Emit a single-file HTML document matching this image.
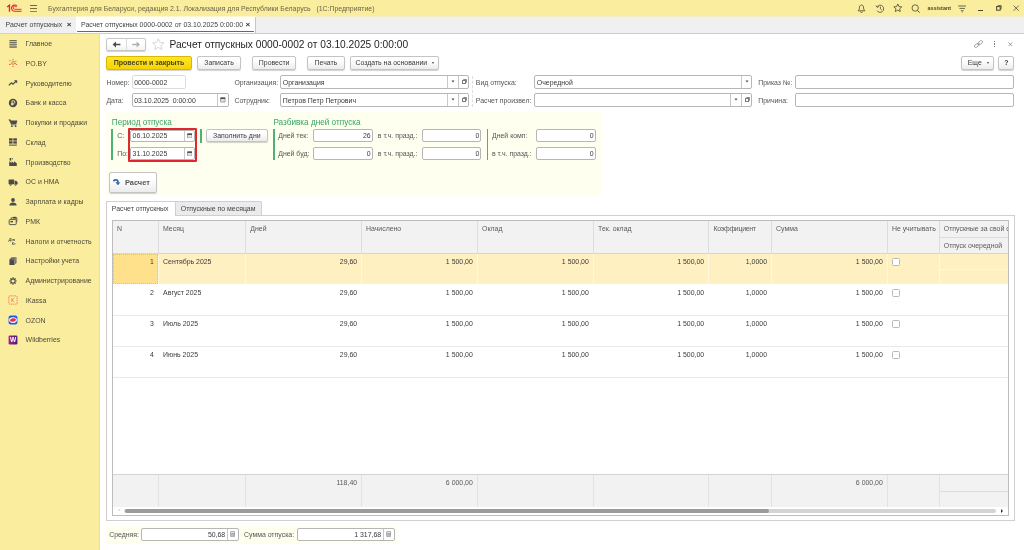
<!DOCTYPE html>
<html><head><meta charset="utf-8"><title>1C</title>
<style>
*{box-sizing:border-box;margin:0;padding:0}
html,body{width:1024px;height:550px;overflow:hidden;background:#fff}
body{font-family:"Liberation Sans",sans-serif;font-size:6.93px;color:#3a3a3a;position:relative;line-height:1}
#root{position:absolute;left:0;top:0;width:1024px;height:550px;will-change:transform}
.a{position:absolute}
.t{position:absolute;white-space:nowrap;line-height:10px;height:10px}
.r{text-align:right}
.btn{position:absolute;border:1px solid #c4c4c4;border-radius:2px;background:linear-gradient(#ffffff 30%,#ececec);box-shadow:0 1px 1px rgba(0,0,0,.18);color:#3a3a3a;text-align:center;white-space:nowrap;line-height:12px}
.inp{position:absolute;border:1px solid #b6b6b6;border-radius:2px;background:#fff}
.dv{position:absolute;width:1px;background:#c8c8c8}
.gb{position:absolute;width:2px;background:#3fae6c}
.side{color:#4d4a3c}
.lbl{color:#555}
.hd{color:#5a5a5a}
</style></head><body><div id="root">
<div class="a" style="left:0;top:0;width:1024px;height:16px;background:#fbed9e"></div>
<div class="a" style="left:0;top:16px;width:1024px;height:1px;background:#f5eec7"></div>
<div class="a" style="left:0;top:17px;width:1024px;height:17px;background:#f0f0f0;border-bottom:1px solid #cbcbcb"></div>
<div class="a" style="left:0;top:34px;width:100px;height:516px;background:#fbed9e;border-right:1px solid #f0df8d"></div>
<div class="a" style="left:0;top:33px;width:100px;height:1px;background:#d9d3ae"></div>
<svg class="a" style="left:6.4px;top:3.6px" width="17" height="9" viewBox="0 0 18 10"><g fill="none" stroke="#e3242d" stroke-width="1.5"><path d="M0.8 3.4 L3.4 1.4 V8.6"/><path d="M11.8 2.6 A3.4 3.4 0 1 0 9 8 H16.8" stroke-width="1.2"/><path d="M10.8 3.8 A1.7 1.7 0 1 0 9.2 5.9 H16.8" stroke-width="1"/></g></svg>
<div class="a" style="left:30px;top:5px;width:7.4px;height:1px;background:#6f694e;box-shadow:0 3px 0 #6f694e,0 6px 0 #8a8468"></div>
<div class="t " style="left:48px;top:3.70px;color:#6a6448;white-space:pre">Бухгалтерия для Беларуси, редакция 2.1. Локализация для Республики Беларусь&nbsp;&nbsp; (1С:Предприятие)</div>
<svg class="a" style="left:857.40px;top:3.60px" width="9" height="9.4" viewBox="0 0 9 9.4"><path d="M4.5 1 C2.8 1 2.4 2.6 2.4 4 C2.4 5.6 1.6 6.2 1 6.8 H8 C7.4 6.2 6.6 5.6 6.6 4 C6.6 2.6 6.2 1 4.5 1 Z" fill="none" stroke="#4a4632" stroke-width="0.8"/><path d="M3.6 7.6 A0.9 0.9 0 0 0 5.4 7.6" fill="none" stroke="#4a4632" stroke-width="0.8"/></svg><svg class="a" style="left:875.40px;top:3.60px" width="10" height="9.4" viewBox="0 0 10 9.4"><path d="M2.2 2.6 A3.6 3.6 0 1 1 2 6.6" fill="none" stroke="#4a4632" stroke-width="0.8"/><path d="M0.8 1.6 L2.2 3.4 L4 2.4" fill="none" stroke="#4a4632" stroke-width="0.8"/><path d="M5.4 2.6 V4.8 L6.8 6" fill="none" stroke="#4a4632" stroke-width="0.8"/></svg><svg class="a" style="left:893.20px;top:3.20px" width="9.6" height="9.4" viewBox="0 0 24 23"><path d="M12 2.2 L14.9 8.8 L22 9.5 L16.7 14.2 L18.2 21.2 L12 17.6 L5.8 21.2 L7.3 14.2 L2 9.5 L9.1 8.8 Z" fill="none" stroke="#4a4632" stroke-width="2" stroke-linejoin="round"/></svg><svg class="a" style="left:911.40px;top:3.60px" width="9.4" height="9.4" viewBox="0 0 9.4 9.4"><circle cx="4.2" cy="4" r="3.2" fill="none" stroke="#4a4632" stroke-width="0.8"/><path d="M6.4 6.4 L8.6 8.6" stroke="#4a4632" stroke-width="1"/></svg><div class="t" style="left:927.6px;top:3.2px;font-size:5.4px;font-weight:bold;color:#4a4632">assistant</div><svg class="a" style="left:958.00px;top:4.60px" width="8.4" height="8" viewBox="0 0 8.4 8"><g stroke="#4a4632" stroke-width="0.8"><path d="M0.2 1 H8.2 M1.4 3.4 H7 M2.8 5.7 H5.6"/></g><path d="M3.5 6.8 H4.9 L4.2 7.8 Z" fill="#4a4632"/></svg><div class="a" style="left:977.8px;top:10.2px;width:5px;height:1px;background:#4a4632"></div><svg class="a" style="left:995.60px;top:5.00px" width="6" height="6" viewBox="0 0 6 6"><rect x="0.6" y="1.6" width="3.6" height="3.6" fill="none" stroke="#4a4632" stroke-width="1"/><path d="M2 1.4 V0.6 H5.2 V3.8 H4.4" fill="none" stroke="#4a4632" stroke-width="0.8"/></svg><svg class="a" style="left:1013.40px;top:5.00px" width="6.4" height="6.4" viewBox="0 0 6.4 6.4"><path d="M0.6 0.6 L5.8 5.8 M5.8 0.6 L0.6 5.8" stroke="#4a4632" stroke-width="0.8"/></svg>
<div class="a" style="left:75.5px;top:17px;width:1px;height:17px;background:#d8d8d8"></div>
<div class="t " style="left:5.5px;top:20.20px;color:#444">Расчет отпускных</div>
<div class="t " style="left:66.8px;top:20.00px;font-size:8px;color:#333;font-weight:bold">×</div>
<div class="a" style="left:76px;top:17px;width:180px;height:16px;background:#fff;border-right:1px solid #c8c8c8;box-shadow:0 -1px 0 #fdf6ce"></div>
<div class="a" style="left:77px;top:31px;width:177px;height:1px;background:#0f9b4e;border-radius:0.5px"></div>
<div class="t " style="left:81px;top:20.20px;color:#444">Расчет отпускных 0000-0002 от 03.10.2025 0:00:00</div>
<div class="t " style="left:245.6px;top:20.00px;font-size:8px;color:#333;font-weight:bold">×</div>
<div class="t side" style="left:25.6px;top:39.20px;">Главное</div>
<svg class="a" style="left:8.10px;top:38.60px" width="10" height="10" viewBox="0 0 10 10"><rect x="1.4" y="1.20" width="7.4" height="1.05" fill="#4b4b4b"/><rect x="1.4" y="3.25" width="7.4" height="1.05" fill="#4b4b4b"/><rect x="1.4" y="5.30" width="7.4" height="1.05" fill="#4b4b4b"/><rect x="1.4" y="7.1" width="7.4" height="1.9" fill="#8c8873"/></svg>
<div class="t side" style="left:25.6px;top:58.95px;">PO.BY</div>
<svg class="a" style="left:7.50px;top:58.00px" width="10" height="10" viewBox="0 0 10 10"><g stroke="#eab45c" stroke-width="0.5"><line x1="5.00" y1="4.90" x2="5.00" y2="1.30"/><line x1="5.00" y1="4.90" x2="1.90" y2="2.50"/><line x1="5.00" y1="4.90" x2="5.00" y2="3.50"/><line x1="5.00" y1="4.90" x2="7.00" y2="3.40"/><line x1="5.00" y1="4.90" x2="3.70" y2="5.10"/><line x1="5.00" y1="4.90" x2="7.00" y2="5.50"/><line x1="5.00" y1="4.90" x2="8.60" y2="6.40"/><line x1="5.00" y1="4.90" x2="1.90" y2="6.40"/><line x1="5.00" y1="4.90" x2="5.00" y2="6.60"/><line x1="5.00" y1="4.90" x2="5.00" y2="8.40"/><line x1="7" y1="3.4" x2="8.8" y2="3.2"/></g><circle cx="5.00" cy="1.30" r="0.5" fill="#e8323a"/><circle cx="1.90" cy="2.50" r="0.5" fill="#e8323a"/><circle cx="5.00" cy="3.50" r="0.5" fill="#e8323a"/><circle cx="7.00" cy="3.40" r="0.5" fill="#e8323a"/><circle cx="3.70" cy="5.10" r="0.5" fill="#e8323a"/><circle cx="7.00" cy="5.50" r="0.65" fill="#e8323a"/><circle cx="8.60" cy="6.40" r="0.5" fill="#e8323a"/><circle cx="1.90" cy="6.40" r="0.65" fill="#e8323a"/><circle cx="5.00" cy="6.60" r="0.5" fill="#e8323a"/><circle cx="5.00" cy="8.40" r="0.5" fill="#e8323a"/><circle cx="8.6" cy="3.2" r="0.45" fill="#f0b050"/></svg>
<div class="t side" style="left:25.6px;top:78.70px;">Руководителю</div>
<svg class="a" style="left:8.10px;top:78.10px" width="10" height="10" viewBox="0 0 10 10"><path d="M0.8 7.4 L3.4 4.8 L5 6.2 L8.2 3" fill="none" stroke="#4b4b4b" stroke-width="1.3"/><path d="M6 2.2 H9.2 V5.4 Z" fill="#4b4b4b"/></svg>
<div class="t side" style="left:25.6px;top:98.45px;">Банк и касса</div>
<svg class="a" style="left:8.10px;top:97.85px" width="10" height="10" viewBox="0 0 10 10"><circle cx="5" cy="5" r="4.2" fill="#4b4b4b"/><path d="M4 7.6 V2.8 H5.6 A1.3 1.3 0 0 1 5.6 5.4 H3.2 M3.2 6.5 H5.6" fill="none" stroke="#fbed9e" stroke-width="0.9"/></svg>
<div class="t side" style="left:25.6px;top:118.20px;">Покупки и продажи</div>
<svg class="a" style="left:8.10px;top:117.60px" width="10" height="10" viewBox="0 0 10 10"><path d="M0.4 1.4 H2 L2.6 2.6 H9.4 L8.4 6 H3.4 Z" fill="#4b4b4b"/><path d="M2 1.4 L3.4 6.8 H8.4" fill="none" stroke="#4b4b4b" stroke-width="0.8"/><circle cx="3.9" cy="8.2" r="0.9" fill="#4b4b4b"/><circle cx="7.6" cy="8.2" r="0.9" fill="#4b4b4b"/></svg>
<div class="t side" style="left:25.6px;top:137.95px;">Склад</div>
<svg class="a" style="left:8.10px;top:137.35px" width="10" height="10" viewBox="0 0 10 10"><g fill="#4b4b4b"><rect x="1" y="1.3" width="3.6" height="2.3"/><rect x="5.3" y="1.3" width="3.6" height="2.3"/><rect x="1" y="4.3" width="3.6" height="2.3"/><rect x="5.3" y="4.3" width="3.6" height="2.3"/><rect x="1" y="7.6" width="7.9" height="1"/></g></svg>
<div class="t side" style="left:25.6px;top:157.70px;">Производство</div>
<svg class="a" style="left:8.10px;top:157.10px" width="10" height="10" viewBox="0 0 10 10"><path d="M1.2 9 V4.2 L3.6 6 V4.2 L6 6 V4.2 L8.8 6.2 V9 Z" fill="#4b4b4b"/><rect x="1.6" y="1" width="1.6" height="2.6" fill="#4b4b4b"/><rect x="3.8" y="1" width="1.2" height="1.4" fill="#4b4b4b" opacity=".7"/></svg>
<div class="t side" style="left:25.6px;top:177.45px;">ОС и НМА</div>
<svg class="a" style="left:8.10px;top:176.85px" width="10" height="10" viewBox="0 0 10 10"><g fill="#4b4b4b"><rect x="0.6" y="2.6" width="5.6" height="4.6" rx="0.4"/><path d="M6.6 3.8 H8.4 L9.6 5.4 V7.2 H6.6 Z"/><circle cx="2.6" cy="7.6" r="1.1"/><circle cx="7.6" cy="7.6" r="1.1"/></g><circle cx="2.6" cy="7.6" r="0.4" fill="#fbed9e"/><circle cx="7.6" cy="7.6" r="0.4" fill="#fbed9e"/></svg>
<div class="t side" style="left:25.6px;top:197.20px;">Зарплата и кадры</div>
<svg class="a" style="left:8.10px;top:196.60px" width="10" height="10" viewBox="0 0 10 10"><circle cx="5" cy="3" r="1.9" fill="#4b4b4b"/><path d="M1.4 8.6 C1.4 6 3 5.4 5 5.4 C7 5.4 8.6 6 8.6 8.6 Z" fill="#4b4b4b"/></svg>
<div class="t side" style="left:25.6px;top:216.95px;">РМК</div>
<svg class="a" style="left:8.10px;top:216.35px" width="10" height="10" viewBox="0 0 10 10"><g fill="none" stroke="#4b4b4b" stroke-width="0.9"><rect x="1.2" y="3.6" width="7" height="5" rx="0.6"/><path d="M3.2 3.4 V1.8 H8.8 V6"/></g><rect x="5.2" y="0.8" width="3" height="1.8" fill="#4b4b4b"/><rect x="2.4" y="5" width="2.6" height="1.4" fill="#4b4b4b"/></svg>
<div class="t side" style="left:25.6px;top:236.70px;">Налоги и отчетность</div>
<svg class="a" style="left:8.10px;top:236.10px" width="10" height="10" viewBox="0 0 10 10"><text x="0.6" y="4.6" font-family="Liberation Sans" font-size="4.2" font-style="italic" font-weight="bold" fill="#4b4b4b">Дт</text><text x="3.8" y="9" font-family="Liberation Sans" font-size="3.6" font-weight="bold" fill="#4b4b4b">Кт</text></svg>
<div class="t side" style="left:25.6px;top:256.45px;">Настройки учета</div>
<svg class="a" style="left:8.10px;top:255.85px" width="10" height="10" viewBox="0 0 10 10"><path d="M1.4 3.2 L6.4 3.2 L6.4 9 L1.4 9 Z" fill="#4b4b4b"/><path d="M1.4 3.2 L3.6 1.2 L8.6 1.2 L6.4 3.2 Z" fill="#6a6a6a"/><path d="M6.4 3.2 L8.6 1.2 L8.6 7 L6.4 9 Z" fill="#7a7a7a"/></svg>
<div class="t side" style="left:25.6px;top:276.20px;">Администрирование</div>
<svg class="a" style="left:8.10px;top:275.60px" width="10" height="10" viewBox="0 0 10 10"><circle cx="5" cy="5" r="2.1" fill="none" stroke="#4b4b4b" stroke-width="1.1"/><g stroke="#4b4b4b" stroke-width="1.2"><line x1="7.50" y1="5.00" x2="8.70" y2="5.00"/><line x1="6.77" y1="6.77" x2="7.62" y2="7.62"/><line x1="5.00" y1="7.50" x2="5.00" y2="8.70"/><line x1="3.23" y1="6.77" x2="2.38" y2="7.62"/><line x1="2.50" y1="5.00" x2="1.30" y2="5.00"/><line x1="3.23" y1="3.23" x2="2.38" y2="2.38"/><line x1="5.00" y1="2.50" x2="5.00" y2="1.30"/><line x1="6.77" y1="3.23" x2="7.62" y2="2.38"/></g></svg>
<div class="t side" style="left:25.6px;top:295.95px;">iKassa</div>
<svg class="a" style="left:7.70px;top:295.35px" width="10" height="10" viewBox="0 0 10 10"><rect x="0.9" y="0.9" width="8.2" height="8.2" rx="0.8" fill="#fdeeb0" stroke="#ee6a2c" stroke-width="0.9" stroke-dasharray="1.1 0.7"/><path d="M3.8 3 V7 M6.4 3 L4 5 L6.4 7" fill="none" stroke="#f0862a" stroke-width="0.8"/></svg>
<div class="t side" style="left:25.6px;top:315.70px;">OZON</div>
<svg class="a" style="left:7.70px;top:315.10px" width="10" height="10" viewBox="0 0 10 10"><rect x="0.6" y="0.6" width="8.8" height="8.8" rx="2" fill="#1a5cf0"/><ellipse cx="5" cy="5.1" rx="3.9" ry="2.8" fill="#fff"/><ellipse cx="5" cy="5" rx="3" ry="1.7" fill="#e83048" transform="rotate(-14 5 5)"/></svg>
<div class="t side" style="left:25.6px;top:335.45px;">Wildberries</div>
<svg class="a" style="left:7.70px;top:334.85px" width="10" height="10" viewBox="0 0 10 10"><defs><linearGradient id="wb" x1="0" x2="1"><stop offset="0" stop-color="#a8208e"/><stop offset="1" stop-color="#4a1c70"/></linearGradient></defs><rect x="0.6" y="0.6" width="8.8" height="8.8" rx="1.2" fill="url(#wb)"/><text x="5" y="7.4" text-anchor="middle" font-family="Liberation Sans" font-size="6.6" font-weight="bold" fill="#fff">W</text></svg>
<div class="btn" style="left:106.4px;top:38.2px;width:39.20px;height:12.40px;line-height:10.40px;border-color:#c6c6c6;background:linear-gradient(#fff 40%,#f3f3f3)"></div>
<div class="a" style="left:126px;top:39.2px;width:1px;height:10.40px;background:#dcdcdc"></div>
<svg class="a" style="left:111.5px;top:41px" width="10" height="7" viewBox="0 0 10 7"><path d="M0.6 3.5 L4 0.6 V2.7 H8.4 V4.3 H4 V6.4 Z" fill="#4a4a4a"/></svg>
<svg class="a" style="left:131px;top:41px" width="10" height="7" viewBox="0 0 10 7"><path d="M9 3.5 L5.6 0.6 V2.7 H1.2 V4.3 H5.6 V6.4 Z" fill="#b0b0b0"/></svg>
<svg class="a" style="left:151.5px;top:38px" width="12.5" height="12" viewBox="0 0 24 23"><path d="M12 1.5 L15.1 8.6 L22.8 9.3 L17 14.4 L18.7 22 L12 18 L5.3 22 L7 14.4 L1.2 9.3 L8.9 8.6 Z" fill="#fff" stroke="#d0d0d0" stroke-width="1.6" stroke-linejoin="round"/></svg>
<div class="t " style="left:169.5px;top:40.10px;font-size:10.2px;color:#1e1e1e;line-height:14px;height:14px;margin-top:-2px">Расчет отпускных 0000-0002 от 03.10.2025 0:00:00</div>
<svg class="a" style="left:973.80px;top:39.80px" width="9" height="8.1" viewBox="0 0 10 9"><g fill="none" stroke="#8a8a8a" stroke-width="0.8" transform="rotate(-38 5 4.5)"><rect x="-0.4" y="3" width="5.6" height="3" rx="1.5"/><rect x="4.8" y="3" width="5.6" height="3" rx="1.5"/><path d="M3.4 4.5 H6.6"/></g></svg><div class="a" style="left:993.5px;top:41.0px;width:1.2px;height:1.2px;background:#777"></div><div class="a" style="left:993.5px;top:43.4px;width:1.2px;height:1.2px;background:#777"></div><div class="a" style="left:993.5px;top:45.8px;width:1.2px;height:1.2px;background:#777"></div><svg class="a" style="left:1008.00px;top:41.80px" width="4.6" height="4.6" viewBox="0 0 4.6 4.6"><path d="M0.4 0.4 L4.2 4.2 M4.2 0.4 L0.4 4.2" stroke="#777" stroke-width="0.7"/></svg>
<div class="btn" style="left:106.4px;top:56px;width:85.20px;height:13.60px;line-height:11.60px;background:linear-gradient(#ffe629,#f5d400);border-color:#d8b800;font-weight:bold;color:#4a4322;font-size:7.05px">Провести и закрыть</div>
<div class="btn" style="left:197.2px;top:56px;width:43.70px;height:13.60px;line-height:11.60px;">Записать</div>
<div class="btn" style="left:251.8px;top:56px;width:44.70px;height:13.60px;line-height:11.60px;">Провести</div>
<div class="btn" style="left:307.2px;top:56px;width:37.40px;height:13.60px;line-height:11.60px;">Печать</div>
<div class="btn" style="left:349.6px;top:56px;width:89.20px;height:13.60px;line-height:11.60px;">Создать на основании&nbsp;&nbsp;&nbsp;</div>
<div class="a" style="left:431.6px;top:62px;width:0;height:0;border-left:1.8px solid transparent;border-right:1.8px solid transparent;border-top:2px solid #444"></div>
<div class="btn" style="left:961px;top:56px;width:33.20px;height:13.60px;line-height:11.60px;">Еще&nbsp;&nbsp;&nbsp;</div>
<div class="a" style="left:986.6px;top:62px;width:0;height:0;border-left:1.8px solid transparent;border-right:1.8px solid transparent;border-top:2px solid #444"></div>
<div class="btn" style="left:998.4px;top:56px;width:16.00px;height:13.60px;line-height:11.60px;font-weight:bold">?</div>
<div class="t lbl" style="left:106.4px;top:77.60px;">Номер:</div>
<div class="inp" style="left:132px;top:75.2px;width:53.50px;height:13.40px;border-color:#dcdcdc"></div>
<div class="t " style="left:134.2px;top:77.60px;">0000-0002</div>
<div class="t lbl" style="left:106.4px;top:95.60px;">Дата:</div>
<div class="inp" style="left:132px;top:93.2px;width:96.60px;height:13.40px;"></div>
<div class="a" style="left:217.2px;top:94.2px;width:1px;height:11.40px;background:#c8c8c8"></div>
<div class="t " style="left:134.2px;top:95.60px;">03.10.2025&nbsp; 0:00:00</div>
<svg class="a" style="left:220.20px;top:97.20px" width="5.6" height="5.6" viewBox="0 0 5.6 5.6"><rect x="0.5" y="0.7" width="4.6" height="4.4" rx="0.5" fill="#dedede" stroke="#707070" stroke-width="0.6"/><rect x="0.4" y="0.5" width="4.8" height="1.5" fill="#505050"/></svg>
<div class="t lbl" style="left:234.4px;top:77.60px;">Организация:</div>
<div class="inp" style="left:280.2px;top:75.2px;width:189.10px;height:13.40px;"></div>
<div class="a" style="left:447.2px;top:76.2px;width:1px;height:11.40px;background:#c8c8c8"></div>
<div class="a" style="left:458.3px;top:76.2px;width:1px;height:11.40px;background:#c8c8c8"></div>
<div class="t " style="left:282.8px;top:77.60px;">Организация</div>
<div class="t lbl" style="left:234.4px;top:95.60px;">Сотрудник:</div>
<div class="inp" style="left:280.2px;top:93.2px;width:189.10px;height:13.40px;"></div>
<div class="a" style="left:447.2px;top:94.2px;width:1px;height:11.40px;background:#c8c8c8"></div>
<div class="a" style="left:458.3px;top:94.2px;width:1px;height:11.40px;background:#c8c8c8"></div>
<div class="t " style="left:282.8px;top:95.60px;">Петров Петр Петрович</div>
<div class="a" style="left:472.2px;top:75.5px;width:0;height:31px;border-left:1px dashed #dedede"></div>
<div class="t lbl" style="left:475.8px;top:77.60px;">Вид отпуска:</div>
<div class="inp" style="left:534.2px;top:75.2px;width:218.10px;height:13.40px;"></div>
<div class="a" style="left:741.2px;top:76.2px;width:1px;height:11.40px;background:#c8c8c8"></div>
<div class="t " style="left:536.8px;top:77.60px;">Очередной</div>
<div class="t lbl" style="left:475.8px;top:95.60px;">Расчет произвел:</div>
<div class="inp" style="left:534.2px;top:93.2px;width:218.10px;height:13.40px;"></div>
<div class="a" style="left:730.2px;top:94.2px;width:1px;height:11.40px;background:#c8c8c8"></div>
<div class="a" style="left:741.2px;top:94.2px;width:1px;height:11.40px;background:#c8c8c8"></div>
<div class="t lbl" style="left:758.2px;top:77.60px;">Приказ №:</div>
<div class="inp" style="left:795.2px;top:75.2px;width:219.00px;height:13.40px;"></div>
<div class="t lbl" style="left:758.2px;top:95.60px;">Причина:</div>
<div class="inp" style="left:795.2px;top:93.2px;width:219.00px;height:13.40px;"></div>
<svg class="a" style="left:450.70px;top:80.20px" width="4" height="3" viewBox="0 0 4 3"><path d="M0.5 0.5 H3.5 L2 2.6 Z" fill="#4a4a4a"/></svg>
<svg class="a" style="left:462px;top:79px" width="5" height="5" viewBox="0 0 5 5"><g fill="none" stroke="#7a7a7a" stroke-width="1"><rect x="0.5" y="1.5" width="3" height="3"/><path d="M1.5 1.5 V0.5 H4.5 V3.5 H3.5" stroke="#8a8a8a"/></g></svg>
<svg class="a" style="left:450.70px;top:98.10px" width="4" height="3" viewBox="0 0 4 3"><path d="M0.5 0.5 H3.5 L2 2.6 Z" fill="#4a4a4a"/></svg>
<svg class="a" style="left:462px;top:97px" width="5" height="5" viewBox="0 0 5 5"><g fill="none" stroke="#7a7a7a" stroke-width="1"><rect x="0.5" y="1.5" width="3" height="3"/><path d="M1.5 1.5 V0.5 H4.5 V3.5 H3.5" stroke="#8a8a8a"/></g></svg>
<svg class="a" style="left:744.80px;top:80.20px" width="4" height="3" viewBox="0 0 4 3"><path d="M0.5 0.5 H3.5 L2 2.6 Z" fill="#4a4a4a"/></svg>
<svg class="a" style="left:733.80px;top:98.10px" width="4" height="3" viewBox="0 0 4 3"><path d="M0.5 0.5 H3.5 L2 2.6 Z" fill="#4a4a4a"/></svg>
<svg class="a" style="left:745px;top:97px" width="5" height="5" viewBox="0 0 5 5"><g fill="none" stroke="#7a7a7a" stroke-width="1"><rect x="0.5" y="1.5" width="3" height="3"/><path d="M1.5 1.5 V0.5 H4.5 V3.5 H3.5" stroke="#8a8a8a"/></g></svg>
<div class="a " style="left:106px;top:111.5px;width:494.80px;height:84.50px;background:#fffff0"></div>
<div class="t " style="left:111.8px;top:118.00px;font-size:8.2px;color:#36a565;line-height:12px;height:12px;margin-top:-1px">Период отпуска</div>
<div class="t " style="left:273.4px;top:118.00px;font-size:8.2px;color:#36a565;line-height:12px;height:12px;margin-top:-1px">Разбивка дней отпуска</div>
<div class="a" style="left:111.1px;top:128.5px;width:1.8px;height:31.30px;background:#4cb277"></div>
<div class="a" style="left:200.2px;top:128.5px;width:1.8px;height:14.30px;background:#4cb277"></div>
<div class="a" style="left:273px;top:128.5px;width:1.8px;height:31.30px;background:#4cb277"></div>
<div class="a" style="left:486.6px;top:128.5px;width:1.8px;height:31.30px;background:#4cb277"></div>
<div class="t lbl" style="left:117.2px;top:131.10px;">С:</div>
<div class="t lbl" style="left:117.2px;top:149.10px;">По:</div>
<div class="a " style="left:127.8px;top:128px;width:69.60px;height:34.40px;border:2px solid #e0282c;border-radius:1px"></div>
<div class="inp" style="left:130.4px;top:129.6px;width:64.60px;height:12.00px;"></div>
<div class="a" style="left:183.6px;top:130.6px;width:1px;height:10.00px;background:#c8c8c8"></div>
<div class="inp" style="left:130.4px;top:146.7px;width:64.60px;height:13.30px;"></div>
<div class="a" style="left:183.6px;top:147.7px;width:1px;height:11.30px;background:#c8c8c8"></div>
<div class="t " style="left:132.6px;top:131.10px;">06.10.2025</div>
<div class="t " style="left:132.6px;top:149.10px;">31.10.2025</div>
<svg class="a" style="left:186.60px;top:132.60px" width="5.6" height="5.6" viewBox="0 0 5.6 5.6"><rect x="0.5" y="0.7" width="4.6" height="4.4" rx="0.5" fill="#dedede" stroke="#707070" stroke-width="0.6"/><rect x="0.4" y="0.5" width="4.8" height="1.5" fill="#505050"/></svg><svg class="a" style="left:186.60px;top:150.60px" width="5.6" height="5.6" viewBox="0 0 5.6 5.6"><rect x="0.5" y="0.7" width="4.6" height="4.4" rx="0.5" fill="#dedede" stroke="#707070" stroke-width="0.6"/><rect x="0.4" y="0.5" width="4.8" height="1.5" fill="#505050"/></svg>
<div class="btn" style="left:206px;top:128.5px;width:61.60px;height:13.50px;line-height:11.50px;">Заполнить дни</div>
<div class="t lbl" style="left:278.2px;top:131.10px;">Дней тек:</div>
<div class="t lbl" style="left:278.2px;top:149.10px;">Дней буд:</div>
<div class="inp" style="left:313.1px;top:128.6px;width:59.60px;height:13.00px;"></div>
<div class="inp" style="left:313.1px;top:146.6px;width:59.60px;height:13.10px;"></div>
<div class="t " style="right:653.40px;top:131.10px;">26</div>
<div class="t " style="right:653.40px;top:149.10px;">0</div>
<div class="t lbl" style="left:377.8px;top:131.10px;">в т.ч. празд.:</div>
<div class="t lbl" style="left:377.8px;top:149.10px;">в т.ч. празд.:</div>
<div class="inp" style="left:422.1px;top:128.6px;width:59.30px;height:13.00px;"></div>
<div class="inp" style="left:422.1px;top:146.6px;width:59.30px;height:13.10px;"></div>
<div class="t " style="right:544.60px;top:131.10px;">0</div>
<div class="t " style="right:544.60px;top:149.10px;">0</div>
<div class="t lbl" style="left:492px;top:131.10px;">Дней комп:</div>
<div class="t lbl" style="left:492px;top:149.10px;">в т.ч. празд.:</div>
<div class="inp" style="left:536.2px;top:128.6px;width:59.40px;height:13.00px;"></div>
<div class="inp" style="left:536.2px;top:146.6px;width:59.40px;height:13.10px;"></div>
<div class="t " style="right:430.40px;top:131.10px;">0</div>
<div class="t " style="right:430.40px;top:149.10px;">0</div>
<div class="btn" style="left:109.2px;top:172px;width:47.40px;height:20.70px;line-height:18.70px;"></div>
<div class="t " style="left:125px;top:178.10px;font-weight:bold;color:#555;font-size:7.4px">Расчет</div>
<svg class="a" style="left:113px;top:178.8px" width="7.6" height="6.6" viewBox="0 0 7.6 6.6"><path d="M0.4 2.2 C1.6 0.4 4.9 0.2 5 3.4" fill="none" stroke="#2f62ad" stroke-width="1.7"/><path d="M2.5 3.2 H7.3 L4.9 6.4 Z" fill="#2f62ad"/><path d="M0.8 1.6 C2 0.6 3.6 0.7 4.3 1.8" fill="none" stroke="#6e9ad6" stroke-width="0.5"/></svg>
<div class="a " style="left:106.4px;top:215px;width:908.20px;height:306.00px;border:1px solid #cfcfcf;background:#fff"></div>
<div class="a " style="left:175px;top:201.4px;width:86.60px;height:14.40px;border:1px solid #cfcfcf;background:#ebebeb;border-radius:1px 1px 0 0"></div>
<div class="a " style="left:106.4px;top:201.4px;width:69.20px;height:15.00px;border:1px solid #cfcfcf;border-bottom:none;background:#fff;border-radius:1px 1px 0 0"></div>
<div class="t " style="left:111.8px;top:204.10px;color:#444">Расчет отпускных</div>
<div class="t " style="left:180.8px;top:204.10px;color:#444">Отпускные по месяцам</div>
<div class="a " style="left:112.3px;top:220px;width:896.50px;height:296.00px;border:1px solid #bdbdbd;background:#fff"></div>
<div class="a " style="left:113.3px;top:221px;width:894.50px;height:32.70px;background:#f2f2f2;border-bottom:1px solid #d6d6d6"></div>
<div class="a" style="left:157.7px;top:221px;width:1px;height:32.70px;background:#dddddd"></div>
<div class="a" style="left:245.0px;top:221px;width:1px;height:32.70px;background:#dddddd"></div>
<div class="a" style="left:360.7px;top:221px;width:1px;height:32.70px;background:#dddddd"></div>
<div class="a" style="left:476.7px;top:221px;width:1px;height:32.70px;background:#dddddd"></div>
<div class="a" style="left:592.8px;top:221px;width:1px;height:32.70px;background:#dddddd"></div>
<div class="a" style="left:708.1px;top:221px;width:1px;height:32.70px;background:#dddddd"></div>
<div class="a" style="left:770.8px;top:221px;width:1px;height:32.70px;background:#dddddd"></div>
<div class="a" style="left:886.6px;top:221px;width:1px;height:32.70px;background:#dddddd"></div>
<div class="a" style="left:938.7px;top:221px;width:1px;height:32.70px;background:#dddddd"></div>
<div class="a " style="left:939.7px;top:236.8px;width:68.10px;height:1.00px;background:#dcdcdc"></div>
<div class="t hd" style="left:117px;top:224.10px;">N</div>
<div class="t hd" style="left:163.0px;top:224.10px;">Месяц</div>
<div class="t hd" style="left:250.3px;top:224.10px;">Дней</div>
<div class="t hd" style="left:366.0px;top:224.10px;">Начислено</div>
<div class="t hd" style="left:482.0px;top:224.10px;">Оклад</div>
<div class="t hd" style="left:598.0999999999999px;top:224.10px;">Тек. оклад</div>
<div class="t hd" style="left:713.4px;top:224.10px;letter-spacing:-0.27px">Коэффициент</div>
<div class="t hd" style="left:776.0999999999999px;top:224.10px;">Сумма</div>
<div class="t hd" style="left:891.9px;top:224.10px;">Не учитывать</div>
<div class="t hd" style="left:943.8px;top:224px;width:64px;overflow:hidden">Отпускные за свой счет</div>
<div class="t hd" style="left:943.8px;top:240.90px;">Отпуск очередной</div>
<div class="a " style="left:113.3px;top:253.7px;width:894.50px;height:30.70px;background:#fff0c2"></div>
<div class="a" style="left:157.7px;top:253.7px;width:1px;height:30.70px;background:#fff8e0"></div>
<div class="a" style="left:245.0px;top:253.7px;width:1px;height:30.70px;background:#fff8e0"></div>
<div class="a" style="left:360.7px;top:253.7px;width:1px;height:30.70px;background:#fff8e0"></div>
<div class="a" style="left:476.7px;top:253.7px;width:1px;height:30.70px;background:#fff8e0"></div>
<div class="a" style="left:592.8px;top:253.7px;width:1px;height:30.70px;background:#fff8e0"></div>
<div class="a" style="left:708.1px;top:253.7px;width:1px;height:30.70px;background:#fff8e0"></div>
<div class="a" style="left:770.8px;top:253.7px;width:1px;height:30.70px;background:#fff8e0"></div>
<div class="a" style="left:886.6px;top:253.7px;width:1px;height:30.70px;background:#fff8e0"></div>
<div class="a" style="left:938.7px;top:253.7px;width:1px;height:30.70px;background:#fff8e0"></div>
<div class="a " style="left:939.7px;top:268.8px;width:68.10px;height:1.00px;border-top:1px dotted #fffaf0"></div>
<div class="a " style="left:113.3px;top:253.7px;width:44.70px;height:30.70px;background:#ffe18c;border:1px dotted #f3bf45"></div>
<div class="t " style="right:870.20px;top:257.20px;">1</div>
<div class="t " style="left:163.1px;top:257.20px;">Сентябрь 2025</div>
<div class="t " style="right:666.90px;top:257.20px;">29,60</div>
<div class="t " style="right:551.20px;top:257.20px;">1 500,00</div>
<div class="t " style="right:435.20px;top:257.20px;">1 500,00</div>
<div class="t " style="right:319.80px;top:257.20px;">1 500,00</div>
<div class="t " style="right:257.00px;top:257.20px;">1,0000</div>
<div class="t " style="right:141.20px;top:257.20px;">1 500,00</div>
<div class="a " style="left:892.4px;top:257.8px;width:8.00px;height:8.00px;border:1px solid #b9b9b9;border-radius:1.5px;background:#fff"></div>
<div class="t " style="right:870.20px;top:287.90px;">2</div>
<div class="t " style="left:163.1px;top:287.90px;">Август 2025</div>
<div class="t " style="right:666.90px;top:287.90px;">29,60</div>
<div class="t " style="right:551.20px;top:287.90px;">1 500,00</div>
<div class="t " style="right:435.20px;top:287.90px;">1 500,00</div>
<div class="t " style="right:319.80px;top:287.90px;">1 500,00</div>
<div class="t " style="right:257.00px;top:287.90px;">1,0000</div>
<div class="t " style="right:141.20px;top:287.90px;">1 500,00</div>
<div class="a " style="left:892.4px;top:288.5px;width:8.00px;height:8.00px;border:1px solid #b9b9b9;border-radius:1.5px;background:#fff"></div>
<div class="a " style="left:113.3px;top:314.9px;width:894.50px;height:1.00px;background:#e9e9e9"></div>
<div class="t " style="right:870.20px;top:318.90px;">3</div>
<div class="t " style="left:163.1px;top:318.90px;">Июль 2025</div>
<div class="t " style="right:666.90px;top:318.90px;">29,60</div>
<div class="t " style="right:551.20px;top:318.90px;">1 500,00</div>
<div class="t " style="right:435.20px;top:318.90px;">1 500,00</div>
<div class="t " style="right:319.80px;top:318.90px;">1 500,00</div>
<div class="t " style="right:257.00px;top:318.90px;">1,0000</div>
<div class="t " style="right:141.20px;top:318.90px;">1 500,00</div>
<div class="a " style="left:892.4px;top:319.5px;width:8.00px;height:8.00px;border:1px solid #b9b9b9;border-radius:1.5px;background:#fff"></div>
<div class="a " style="left:113.3px;top:345.9px;width:894.50px;height:1.00px;background:#e9e9e9"></div>
<div class="t " style="right:870.20px;top:349.90px;">4</div>
<div class="t " style="left:163.1px;top:349.90px;">Июнь 2025</div>
<div class="t " style="right:666.90px;top:349.90px;">29,60</div>
<div class="t " style="right:551.20px;top:349.90px;">1 500,00</div>
<div class="t " style="right:435.20px;top:349.90px;">1 500,00</div>
<div class="t " style="right:319.80px;top:349.90px;">1 500,00</div>
<div class="t " style="right:257.00px;top:349.90px;">1,0000</div>
<div class="t " style="right:141.20px;top:349.90px;">1 500,00</div>
<div class="a " style="left:892.4px;top:350.5px;width:8.00px;height:8.00px;border:1px solid #b9b9b9;border-radius:1.5px;background:#fff"></div>
<div class="a " style="left:113.3px;top:376.9px;width:894.50px;height:1.00px;background:#e9e9e9"></div>
<div class="a " style="left:113.3px;top:474.3px;width:894.50px;height:32.70px;background:#f2f2f2;border-top:1px solid #d4d4d4"></div>
<div class="a" style="left:157.7px;top:475.3px;width:1px;height:31.70px;background:#e2e2e2"></div>
<div class="a" style="left:245.0px;top:475.3px;width:1px;height:31.70px;background:#e2e2e2"></div>
<div class="a" style="left:360.7px;top:475.3px;width:1px;height:31.70px;background:#e2e2e2"></div>
<div class="a" style="left:476.7px;top:475.3px;width:1px;height:31.70px;background:#e2e2e2"></div>
<div class="a" style="left:592.8px;top:475.3px;width:1px;height:31.70px;background:#e2e2e2"></div>
<div class="a" style="left:708.1px;top:475.3px;width:1px;height:31.70px;background:#e2e2e2"></div>
<div class="a" style="left:770.8px;top:475.3px;width:1px;height:31.70px;background:#e2e2e2"></div>
<div class="a" style="left:886.6px;top:475.3px;width:1px;height:31.70px;background:#e2e2e2"></div>
<div class="a" style="left:938.7px;top:475.3px;width:1px;height:31.70px;background:#e2e2e2"></div>
<div class="a " style="left:939.7px;top:490.8px;width:68.10px;height:1.00px;background:#dcdcdc"></div>
<div class="t hd" style="right:666.90px;top:478.00px;">118,40</div>
<div class="t hd" style="right:551.20px;top:478.00px;">6 000,00</div>
<div class="t hd" style="right:141.20px;top:478.00px;">6 000,00</div>
<div class="a " style="left:124px;top:508.8px;width:872.00px;height:4.40px;background:#d4d4d4;border-radius:2.2px"></div>
<div class="a " style="left:124.8px;top:508.8px;width:644.60px;height:4.40px;background:#9b9b9b;border-radius:2.2px"></div>
<div class="a" style="left:117.6px;top:509.2px;width:0;height:0;border-top:1.7px solid transparent;border-bottom:1.7px solid transparent;border-right:2.2px solid #cfcfcf"></div>
<div class="a" style="left:1000.6px;top:509px;width:0;height:0;border-top:2px solid transparent;border-bottom:2px solid transparent;border-left:2.6px solid #333"></div>
<div class="a " style="left:106px;top:526px;width:290.80px;height:17.60px;background:#fffff0"></div>
<div class="t lbl" style="left:109.2px;top:530.30px;">Средняя:</div>
<div class="inp" style="left:141.4px;top:528.3px;width:97.40px;height:12.90px;"></div>
<div class="a" style="left:227.4px;top:529.3px;width:1px;height:10.90px;background:#c8c8c8"></div>
<div class="t " style="right:798.80px;top:530.30px;">50,68</div>
<div class="t lbl" style="left:244px;top:530.30px;">Сумма отпуска:</div>
<div class="inp" style="left:297.4px;top:528.3px;width:97.20px;height:12.90px;"></div>
<div class="a" style="left:382.6px;top:529.3px;width:1px;height:10.90px;background:#c8c8c8"></div>
<div class="t " style="right:642.80px;top:530.30px;">1 317,68</div>
<svg class="a" style="left:230.00px;top:531.40px" width="5.2" height="6" viewBox="0 0 5.2 6"><rect x="0.3" y="0.3" width="4.6" height="5.4" rx="0.5" fill="#959595"/><rect x="1" y="1" width="3.2" height="1.2" fill="#e8e8e8"/><g fill="#e0e0e0"><rect x="1" y="2.9" width="0.8" height="0.7"/><rect x="2.2" y="2.9" width="0.8" height="0.7"/><rect x="3.4" y="2.9" width="0.8" height="0.7"/><rect x="1" y="4.2" width="0.8" height="0.7"/><rect x="2.2" y="4.2" width="0.8" height="0.7"/><rect x="3.4" y="4.2" width="0.8" height="0.7"/></g></svg>
<svg class="a" style="left:385.60px;top:531.40px" width="5.2" height="6" viewBox="0 0 5.2 6"><rect x="0.3" y="0.3" width="4.6" height="5.4" rx="0.5" fill="#959595"/><rect x="1" y="1" width="3.2" height="1.2" fill="#e8e8e8"/><g fill="#e0e0e0"><rect x="1" y="2.9" width="0.8" height="0.7"/><rect x="2.2" y="2.9" width="0.8" height="0.7"/><rect x="3.4" y="2.9" width="0.8" height="0.7"/><rect x="1" y="4.2" width="0.8" height="0.7"/><rect x="2.2" y="4.2" width="0.8" height="0.7"/><rect x="3.4" y="4.2" width="0.8" height="0.7"/></g></svg>
</div></body></html>
